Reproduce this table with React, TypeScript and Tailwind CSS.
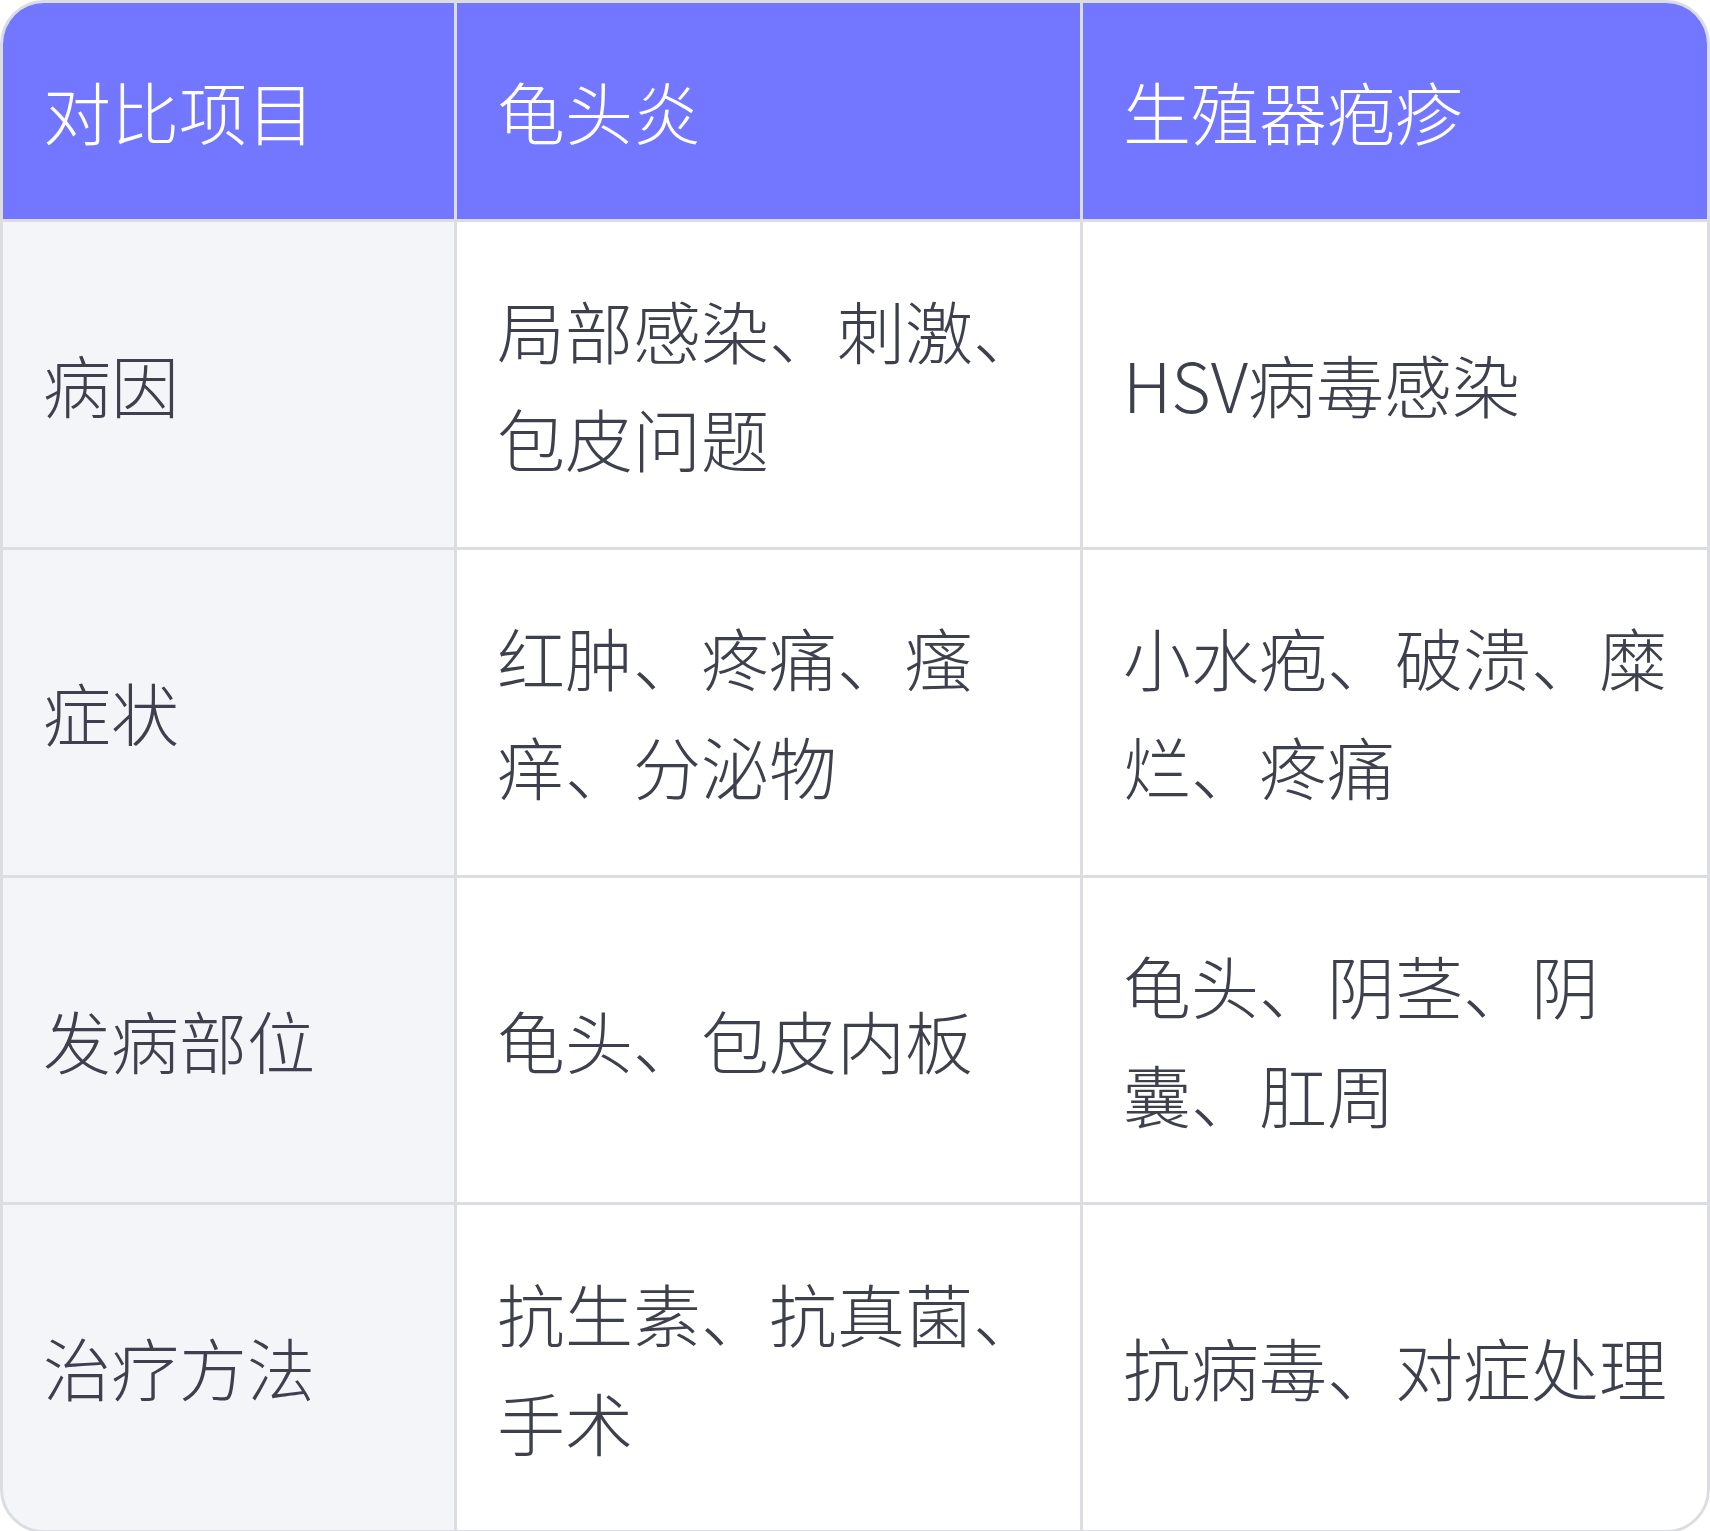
import React from "react";

const rows: [string, string, string][] = [
  ["病因", "局部感染、刺激、包皮问题", "HSV病毒感染"],
  ["症状", "红肿、疼痛、瘙痒、分泌物", "小水疱、破溃、糜烂、疼痛"],
  ["发病部位", "龟头、包皮内板", "龟头、阴茎、阴囊、肛周"],
  ["治疗方法", "抗生素、抗真菌、手术", "抗病毒、对症处理"],
];

const font = { fontFamily: '"Noto Sans CJK SC", "Noto Sans", sans-serif' };

export default function App() {
  return (
    <div className="w-[1710px] bg-white" style={font}>
      <div className="border-[3px] border-[#dcdde2] rounded-[44px] overflow-hidden">
        <div className="grid grid-cols-[451px_623px_1fr] gap-[3px] bg-[#dcdde2] text-[68px] leading-[108.8px] font-light">
          {["对比项目", "龟头炎", "生殖器疱疹"].map((h) => (
            <div key={h} className="bg-[#7377ff] text-white flex items-center pl-[40px] pr-[24px] py-[53.6px]">
              {h}
            </div>
          ))}
          {rows.map((r) => (
            <React.Fragment key={r[0]}>
              <div className="bg-[#f4f5f9] text-[#3e414d] flex items-center pl-[40px] pr-[24px] py-[53.6px]">{r[0]}</div>
              <div className="bg-white text-[#3e414d] flex items-center pl-[40px] pr-[24px] py-[53.6px]">{r[1]}</div>
              <div className="bg-white text-[#3e414d] flex items-center pl-[40px] pr-[24px] py-[53.6px]">{r[2]}</div>
            </React.Fragment>
          ))}
        </div>
      </div>
    </div>
  );
}
